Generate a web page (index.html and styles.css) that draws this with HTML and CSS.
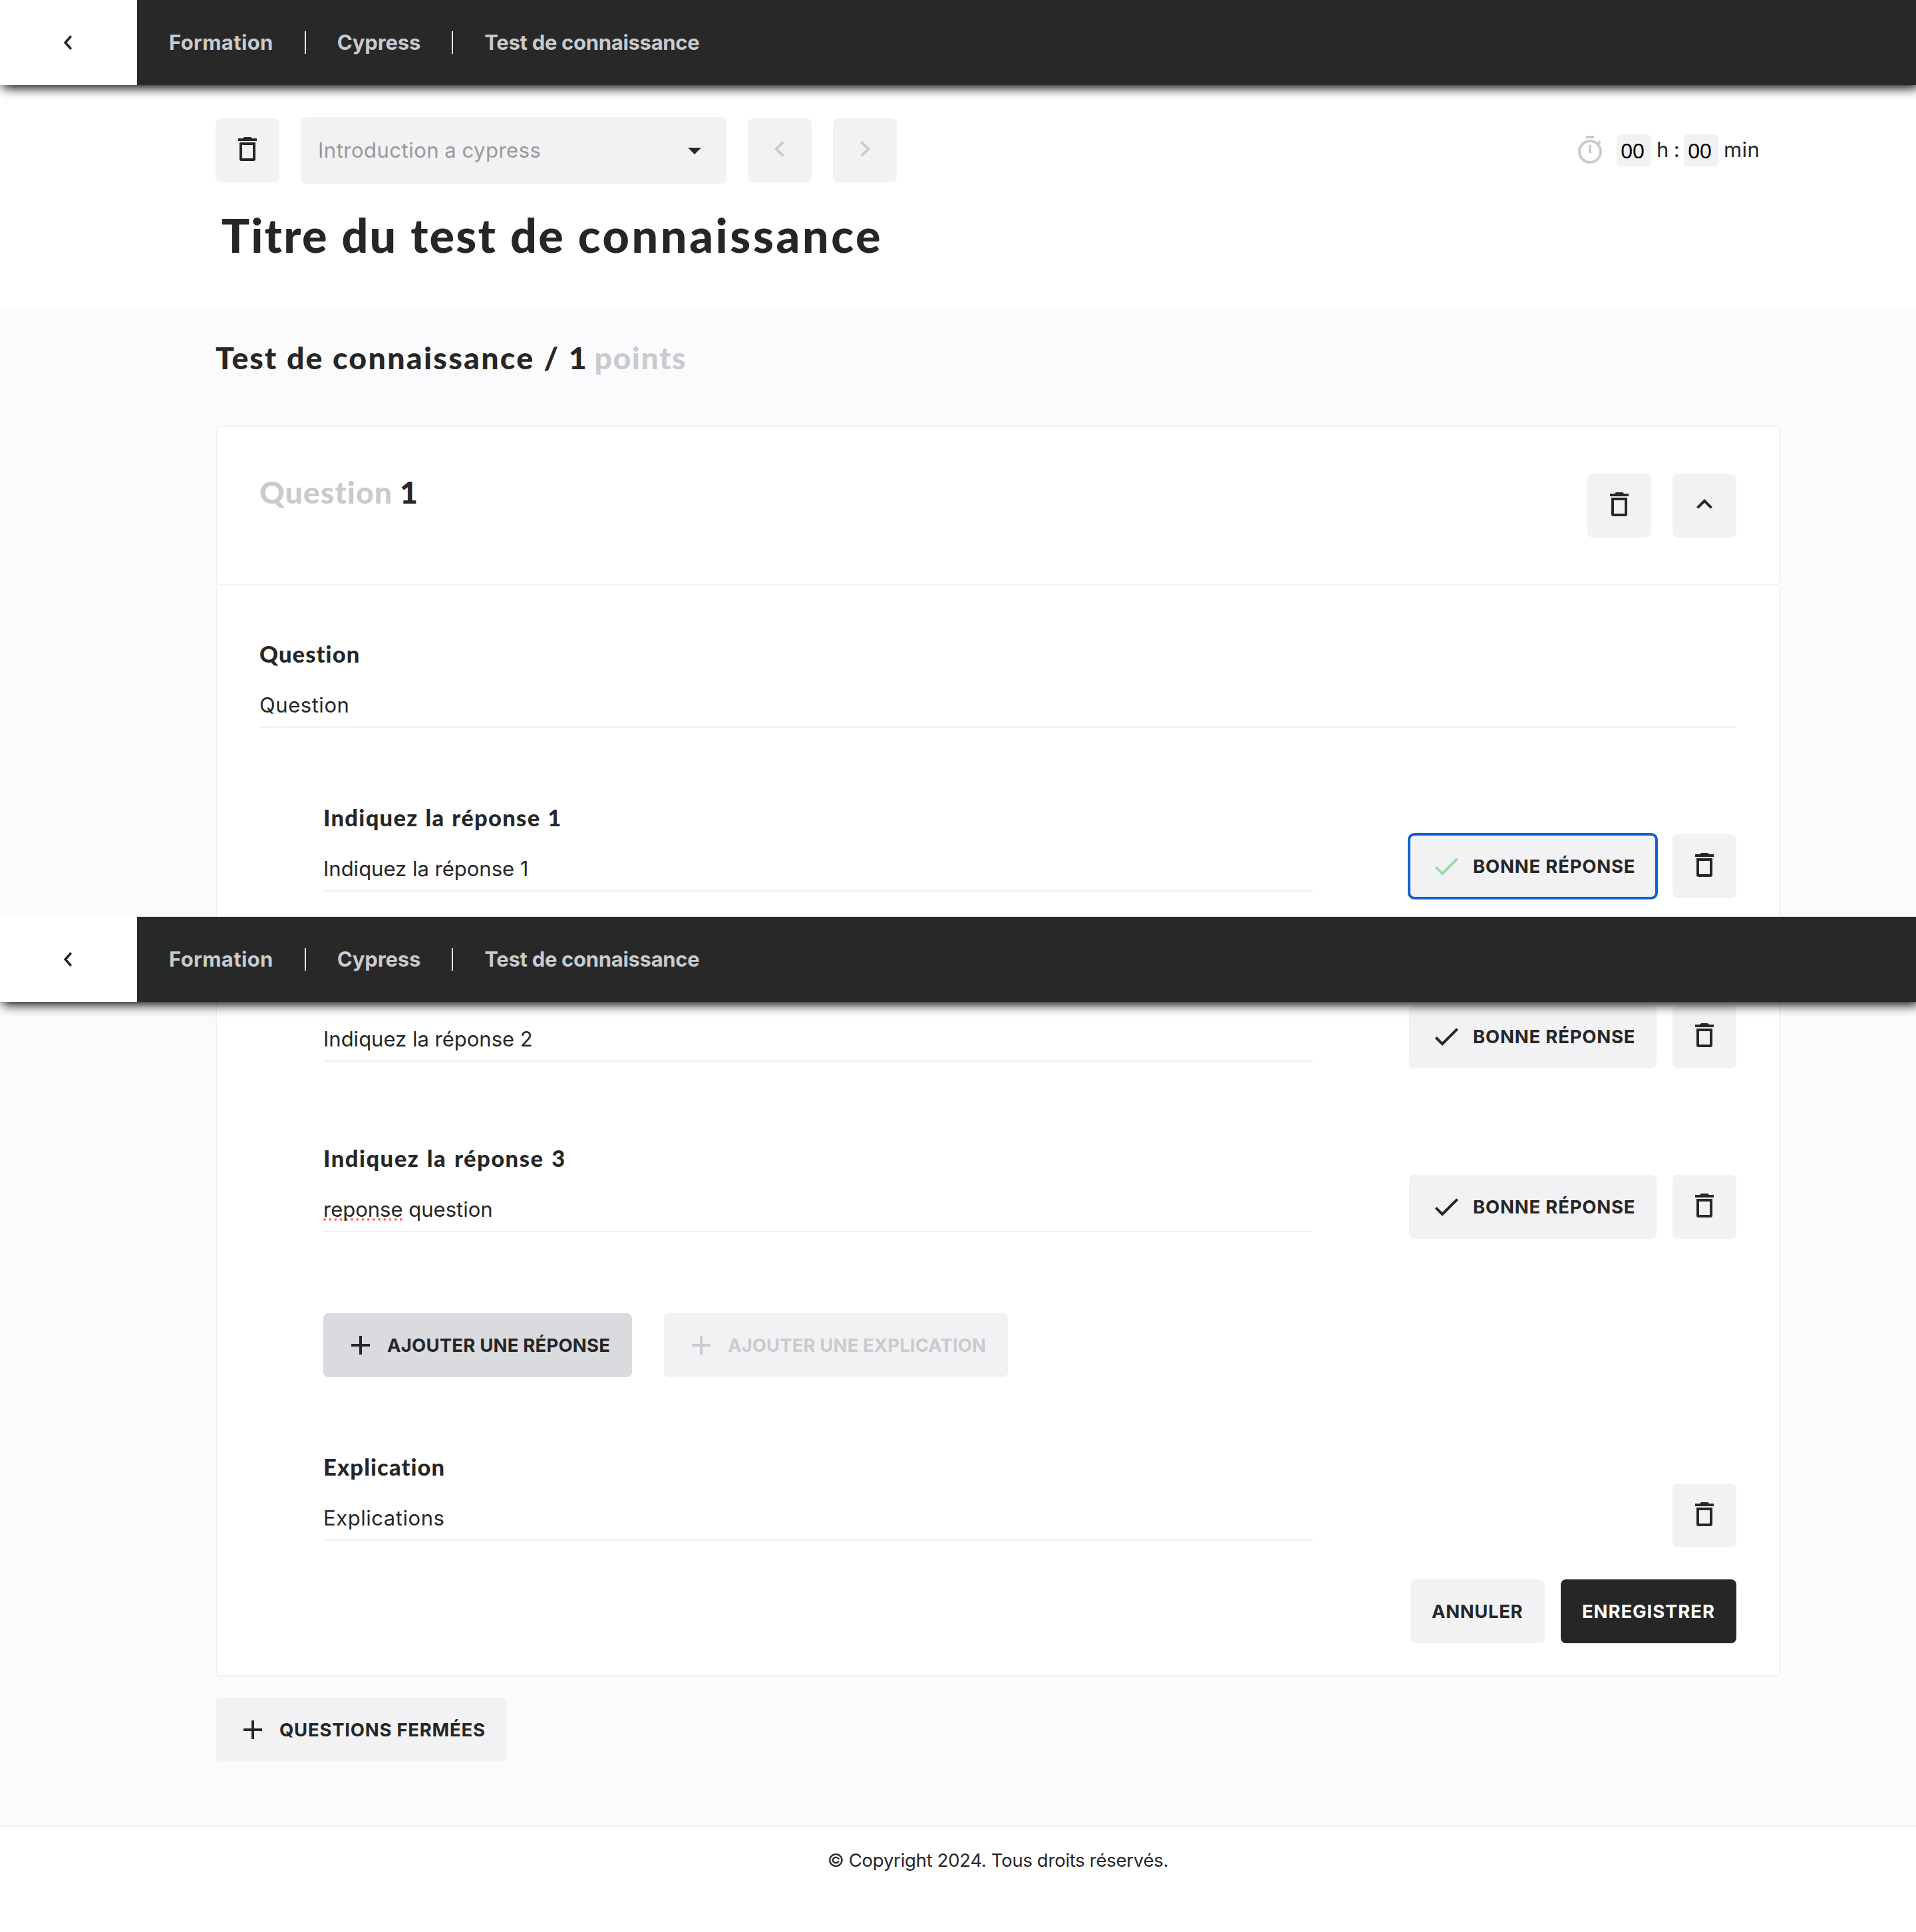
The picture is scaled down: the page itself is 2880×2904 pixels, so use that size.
FILE: index.html
```html
<!DOCTYPE html>
<html lang="fr">
<head>
<meta charset="utf-8">
<title>Test de connaissance</title>
<link rel="stylesheet" href="styles.css">
</head>
<body>
<svg class="sprite" aria-hidden="true">
  <symbol id="trash" viewBox="0 0 24 24"><path fill-rule="evenodd" d="M5 4h3.5l1-1h5l1 1H19v2H5V4zM6 7h12v12.6c0 .8-.6 1.4-1.4 1.4H7.4C6.600 21 6 20.400 6 19.600V7zm2 2v10h8V9H8z"/></symbol>
  <symbol id="plus" viewBox="0 0 24 24"><path d="M19 13h-6v6h-2v-6H5v-2h6V5h2v6h6v2z"/></symbol>
  <symbol id="check" viewBox="0 0 24 24"><path d="M9 16.170L4.830 12l-1.420 1.410L9 19 21 7l-1.410-1.410z"/></symbol>
  <symbol id="left" viewBox="0 0 24 24"><path d="M15.410 16.590L10.830 12l4.580-4.590L14 6l-6 6 6 6z"/></symbol>
  <symbol id="right" viewBox="0 0 24 24"><path d="M8.590 16.590L13.170 12 8.590 7.410 10 6l6 6-6 6z"/></symbol>
  <symbol id="up" viewBox="0 0 24 24"><path d="M7.410 15.410L12 10.830l4.590 4.580L18 14l-6-6-6 6z"/></symbol>
  <symbol id="caret" viewBox="0 0 24 24"><path d="M7 10l5 5 5-5z"/></symbol>
  <symbol id="timer" viewBox="0 0 24 24"><path d="M15 1H9v2h6V1zm-4 13h2V8h-2v6zm8.030-6.610l1.420-1.420c-.43-.51-.9-.99-1.410-1.410l-1.420 1.420A8.962 8.962 0 0 0 12 4c-4.970 0-9 4.030-9 9s4.020 9 9 9 9-4.030 9-9c0-2.120-.74-4.070-1.970-5.610zM12 20c-3.870 0-7-3.130-7-7s3.130-7 7-7 7 3.130 7 7-3.130 7-7 7z"/></symbol>
  <symbol id="back" viewBox="0 0 14 24"><path d="M11.800 2.200L3.200 12l8.600 9.800" fill="none" stroke="currentColor" stroke-width="3.600"/></symbol>
</svg>

<div class="screen screen-top">
  <header class="header">
    <a class="back"><svg class="back-icon"><use href="#back"/></svg></a>
    <nav class="crumbs">
      <span class="crumb crumb-a">Formation</span><i class="sep"></i>
      <span class="crumb crumb-b">Cypress</span><i class="sep"></i>
      <span class="crumb">Test de connaissance</span>
    </nav>
  </header>
  <section class="intro">
    <div class="toolbar">
      <button class="btn square"><svg class="icon up2"><use href="#trash"/></svg></button>
      <div class="select"><span>Introduction a cypress</span><svg class="icon"><use href="#caret"/></svg></div>
      <button class="btn square off"><svg class="icon up2"><use href="#left"/></svg></button>
      <button class="btn square off"><svg class="icon up2"><use href="#right"/></svg></button>
      <div class="duration">
        <svg class="icon timer"><use href="#timer"/></svg>
        <span class="num">00</span><span class="unit unit-h">h :</span><span class="num">00</span><span class="unit">min</span>
      </div>
    </div>
    <h1 class="title">Titre du test de <span class="last">connaissance</span></h1>
  </section>
  <main class="main main-top">
    <h2 class="heading">Test de <span class="long">connaissance</span> / 1 <span class="muted">points</span></h2>
    <div class="card-head">
      <h2 class="heading question"><span class="muted">Question</span> 1</h2>
      <div class="head-actions">
        <button class="btn square"><svg class="icon up2"><use href="#trash"/></svg></button>
        <button class="btn square"><svg class="icon up2"><use href="#up"/></svg></button>
      </div>
    </div>
    <div class="card-body">
      <div class="field"><label class="label short">Question</label><div class="value single">Question</div></div>
      <div class="answer">
        <div class="field"><label class="label">Indiquez la réponse 1</label><div class="value">Indiquez la réponse 1</div></div>
        <div class="actions">
          <button class="btn wide focused"><svg class="icon ok"><use href="#check"/></svg>BONNE RÉPONSE</button>
          <button class="btn square"><svg class="icon up2"><use href="#trash"/></svg></button>
        </div>
      </div>
    </div>
  </main>
</div>

<div class="screen screen-bottom">
  <header class="header">
    <a class="back"><svg class="back-icon"><use href="#back"/></svg></a>
    <nav class="crumbs">
      <span class="crumb crumb-a">Formation</span><i class="sep"></i>
      <span class="crumb crumb-b">Cypress</span><i class="sep"></i>
      <span class="crumb">Test de connaissance</span>
    </nav>
  </header>
  <main class="main main-bottom">
    <div class="card-body card-end">
      <div class="answer">
        <div class="field"><label class="label">Indiquez la réponse 2</label><div class="value">Indiquez la réponse 2</div></div>
        <div class="actions">
          <button class="btn wide"><svg class="icon"><use href="#check"/></svg>BONNE RÉPONSE</button>
          <button class="btn square"><svg class="icon up2"><use href="#trash"/></svg></button>
        </div>
      </div>
      <div class="answer">
        <div class="field"><label class="label roomy">Indiquez la réponse 3</label><div class="value"><span class="spell">reponse</span> question</div></div>
        <div class="actions">
          <button class="btn wide"><svg class="icon"><use href="#check"/></svg>BONNE RÉPONSE</button>
          <button class="btn square"><svg class="icon up2"><use href="#trash"/></svg></button>
        </div>
      </div>
      <div class="add-row">
        <button class="btn add add-answer"><svg class="icon"><use href="#plus"/></svg>AJOUTER UNE RÉPONSE</button>
        <button class="btn add add-note off"><svg class="icon"><use href="#plus"/></svg>AJOUTER UNE EXPLICATION</button>
      </div>
      <div class="answer">
        <div class="field"><label class="label short">Explication</label><div class="value single">Explications</div></div>
        <div class="actions">
          <button class="btn square"><svg class="icon up2"><use href="#trash"/></svg></button>
        </div>
      </div>
      <div class="save-row">
        <button class="btn cancel">ANNULER</button>
        <button class="btn save">ENREGISTRER</button>
      </div>
    </div>
    <button class="btn closed"><svg class="icon"><use href="#plus"/></svg>QUESTIONS FERMÉES</button>
  </main>
  <footer class="footer">© Copyright 2024. Tous droits réservés.</footer>
</div>
</body>
</html>
```
FILE: styles.css
```css
* { box-sizing: border-box; }

body {
  margin: 0;
  width: 2880px;
  background: #fff;
  color: #262626;
  font: 400 31px/40px Inter, "Liberation Sans", sans-serif;
}

h1, h2 { margin: 0; font-family: Lato, "Liberation Sans", sans-serif; font-weight: 900; }

.sprite { display: none; }

.screen { display: flex; flex-direction: column; overflow: hidden; }
.screen-top { height: 1378px; }
.screen-bottom { height: 1526px; }

/* Header */
.header {
  position: relative;
  z-index: 2;
  flex: none;
  display: flex;
  height: 128px;
  background: #282828;
  box-shadow: 4px 4px 16px #000;
}
.back {
  display: flex;
  align-items: center;
  width: 206px;
  padding-left: 95px;
  background: #fff;
}
.back-icon { width: 14px; height: 24px; }
.crumbs {
  display: flex;
  align-items: center;
  gap: 47px;
  padding-left: 48px;
}
.crumb { color: #c9cacd; font-weight: 700; letter-spacing: -.3px; white-space: nowrap; }
.crumb-a { letter-spacing: .35px; }
.crumb-b { letter-spacing: -.1px; }
.sep { width: 2px; height: 34px; background: #fff; }

/* Buttons */
.btn {
  display: flex;
  align-items: center;
  flex: none;
  height: 96px;
  padding: 0 32px;
  gap: 16px;
  border: 0;
  border-radius: 8px;
  background: #f2f2f4;
  color: #262626;
  font: 700 27.5px/40px Inter, "Liberation Sans", sans-serif;
  letter-spacing: .8px;
  white-space: nowrap;
}
.icon { flex: none; width: 48px; height: 48px; fill: currentColor; }
.up2 { margin-bottom: 4px; }
.square { width: 96px; padding: 0 24px; }
.off { color: #c9cbce; }
.wide { width: 372px; }
.focused { outline: 4px solid #1062ce; outline-offset: -2px; }
.ok { color: #9cdca9; }

/* Top section */
.intro { flex: none; height: 336px; padding: 48px 204px 0 324px; }
.toolbar { display: flex; align-items: center; gap: 32px; height: 100px; }
.select {
  display: flex;
  align-items: center;
  justify-content: space-between;
  width: 640px;
  height: 100px;
  padding: 0 24px 0 26px;
  border-radius: 8px;
  background: #f2f2f4;
  letter-spacing: .5px;
  word-spacing: -1px;
}
.select span { color: #98989a; }
.duration {
  display: flex;
  align-items: center;
  width: 310px;
  margin-left: auto;
}
.timer { margin-right: 16px; color: #c9cbce; }
.num {
  width: 52px;
  height: 48px;
  padding-right: 4px;
  border-radius: 6px;
  background: #f2f2f4;
  color: #000;
  font: 400 32px/50px "Liberation Sans", Arial, sans-serif;
  text-align: center;
}
.unit { height: 40px; margin-left: 8px; letter-spacing: .4px; line-height: 38px; }
.unit-h { width: 41px; word-spacing: -2px; white-space: nowrap; }
.title {
  margin: 29px 0 0 9px;
  font-size: 70px;
  line-height: 96px;
  letter-spacing: 2.2px;
  word-spacing: 1px;
}
.last { letter-spacing: 3.600px; }

/* Main area */
.main { background: #fbfbfd; padding: 0 204px 0 324px; }
.main-top { flex: 1; padding-top: 41px; }
.heading { font-size: 46.5px; line-height: 64px; letter-spacing: 1.9px; word-spacing: .8px; }
.long { letter-spacing: 2.3px; }
.muted { color: #c9cacd; letter-spacing: 1.5px; }
.main-top > .heading .muted { margin-left: -4px; }
.card-head {
  display: flex;
  justify-content: space-between;
  height: 240px;
  margin-top: 71px;
  padding: 70px 64px 0;
  border: 2px solid #f1f1f2;
  border-radius: 6px;
  background: #fff;
}
.question { margin-top: -5px; word-spacing: -2px; }
.question .muted { letter-spacing: 1px; }
.head-actions { display: flex; gap: 32px; }
.card-body {
  display: flex;
  flex-direction: column;
  gap: 114px;
  padding: 82px 64px 48px;
  border: solid #f1f1f2;
  border-width: 0 2px;
  background: #fff;
}

.field { height: 132px; border-bottom: 2px solid #f0f0f1; }
.label {
  display: block;
  padding-top: 1px;
  margin-bottom: 37px;
  font: 900 34.5px/40px Lato, "Liberation Sans", sans-serif;
  letter-spacing: 1.3px;
  word-spacing: 1.4px;
}
.short { letter-spacing: 1.1px; }
.roomy { letter-spacing: 1.5px; word-spacing: 2px; }
.value { letter-spacing: 0; }
.single { letter-spacing: .55px; }
.spell {
  text-decoration: underline dotted #ff7272 4px;
  text-underline-offset: 2px;
  text-decoration-skip-ink: none;
}
.answer { display: flex; justify-content: space-between; height: 142px; padding-left: 96px; }
.answer .field { width: 1487px; }
.actions { display: flex; gap: 24px; padding-top: 46px; }

.main-bottom { flex: none; height: 1366px; margin-top: -128px; }
.card-end {
  height: 1142px;
  padding-top: 86px;
  border-bottom-width: 2px;
  border-radius: 0 0 6px 6px;
}
.add-row { display: flex; gap: 48px; margin-top: -2px; padding-left: 96px; }
.add { letter-spacing: .2px; }
.add-answer { width: 464px; background: #dadbdf; }
.add-note { width: 517px; letter-spacing: .1px; }
.save-row { display: flex; justify-content: flex-end; gap: 24px; margin-top: -66px; }
.cancel { width: 202px; letter-spacing: .6px; }
.save { width: 264px; background: #262626; color: #fff; letter-spacing: .9px; }
.closed { width: 437px; margin-top: 32px; letter-spacing: .75px; }

/* Footer */
.footer {
  flex: 1;
  padding: 30px 204px 0 324px;
  border-top: 2px solid #f3f3f3;
  font-size: 27.5px;
  text-align: center;
  letter-spacing: -.23px;
  word-spacing: -.4px;
}
```
